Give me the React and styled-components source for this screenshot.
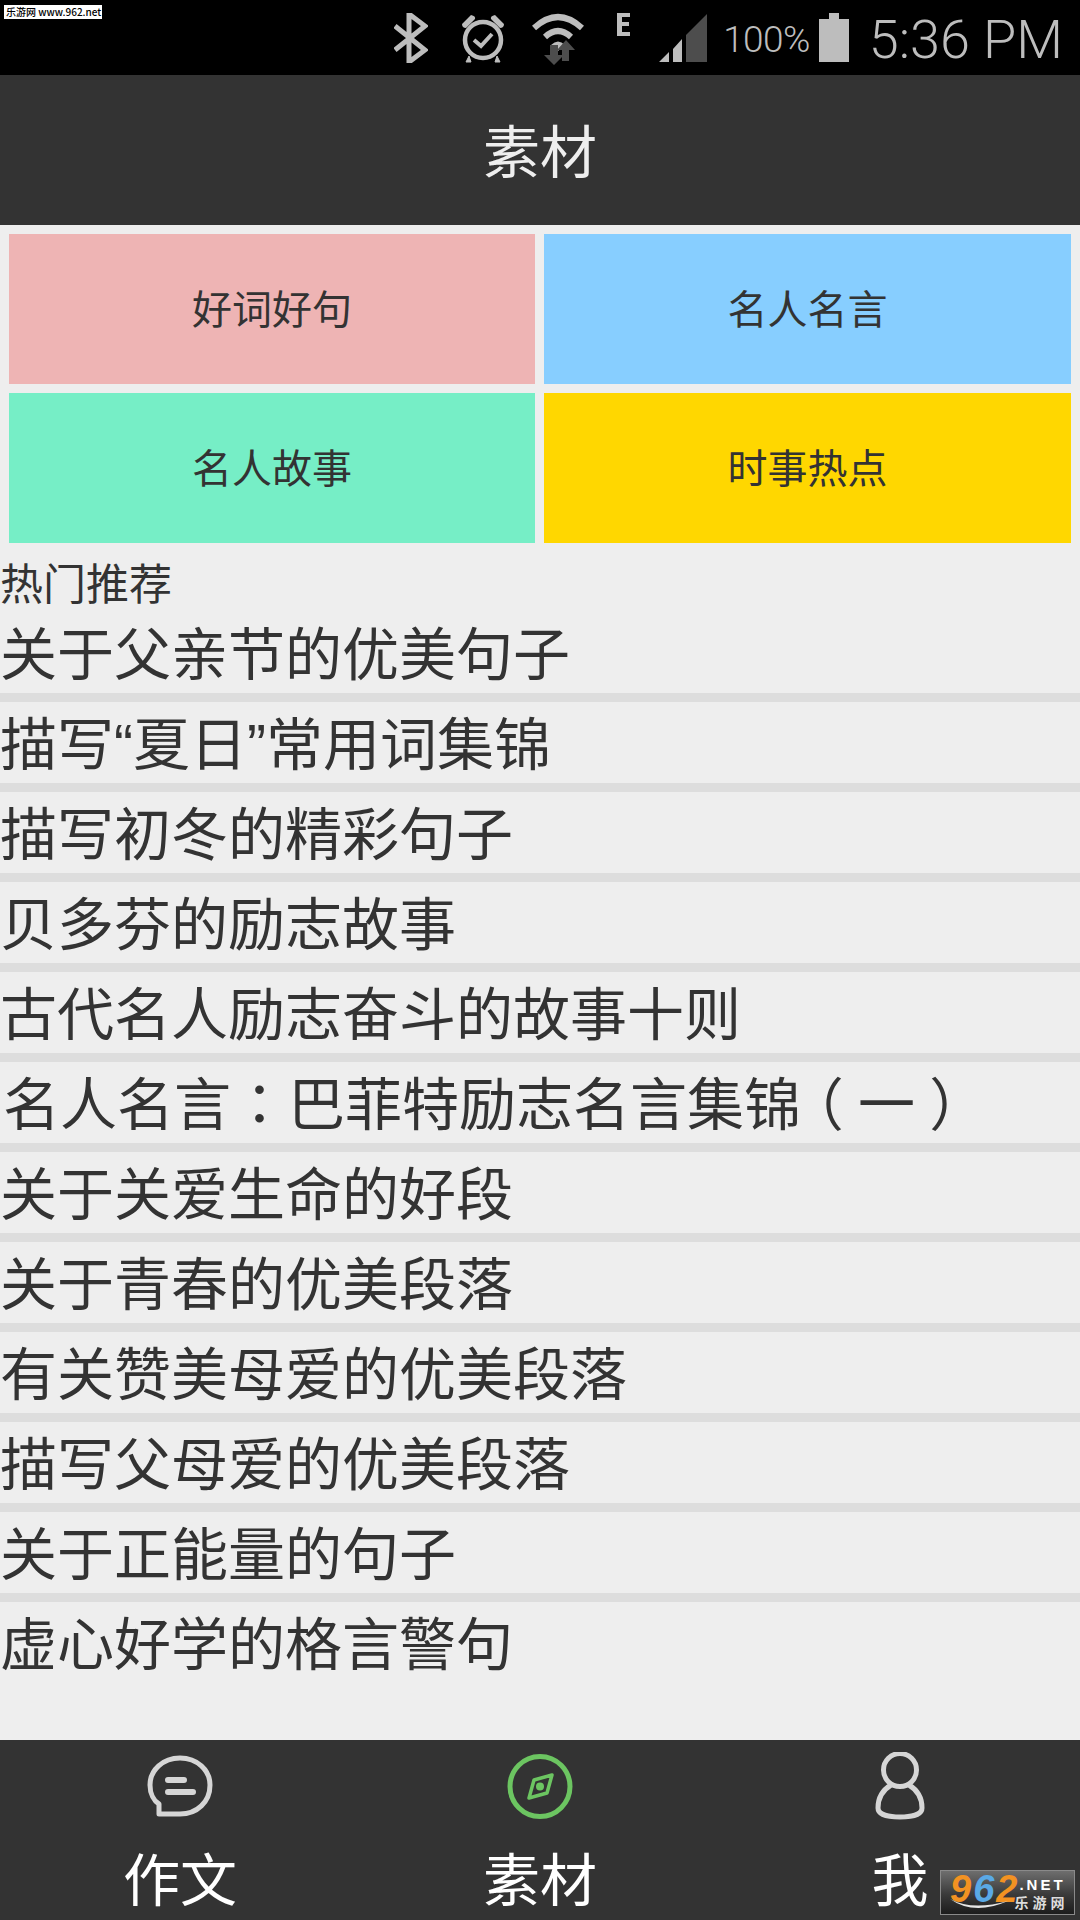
import React from "react";
import styled, { createGlobalStyle } from "styled-components";

const CJK = `"Noto Sans CJK SC", "Noto Sans", sans-serif`;

const Global = createGlobalStyle`
  html, body { margin: 0; padding: 0; background: #eee; }
  * { box-sizing: border-box; }
`;

const Page = styled.div`
  position: relative;
  width: 1080px;
  height: 1920px;
  display: flex;
  flex-direction: column;
  background: #eee;
  font-family: ${CJK};
  overflow: hidden;
`;

const StatusBar = styled.div`
  position: relative;
  height: 75px;
  flex: none;
  background: #000;
  display: flex;
  align-items: center;
  justify-content: flex-end;
  padding-right: 17px;
  color: #bdbdbd;
  font-family: Roboto, sans-serif;
  font-weight: 300;
`;

const Stamp = styled.div`
  position: absolute;
  left: 4px;
  top: 5px;
  width: 98px;
  height: 14px;
  background: #fff;
  color: #000;
  font: 500 10px/14px ${CJK};
  white-space: nowrap;
  padding-left: 2px;
`;

const Glyph = styled.svg`
  display: block;
  flex: none;
  margin-right: ${(p) => p.$gap || 0}px;
`;

const Percent = styled.span`
  font-size: 37px;
  letter-spacing: -0.6px;
  margin-right: 9px;
  margin-top: 4px;
`;

const Clock = styled.span`
  font-size: 54px;
  line-height: 75px;
  margin-top: 4px;
`;

const Header = styled.div`
  height: 150px;
  flex: none;
  background: #333;
  color: #eee;
  font-size: 57px;
  padding-bottom: 5px;
  display: flex;
  align-items: center;
  justify-content: center;
`;

const TileGrid = styled.div`
  display: grid;
  grid-template-columns: 526px 527px;
  grid-auto-rows: 150px;
  gap: 9px;
  padding: 9px 9px 0;
`;

const Tile = styled.div`
  background: ${(p) => p.$bg};
  color: #333;
  font-size: 40px;
  padding-bottom: 4px;
  display: flex;
  align-items: center;
  justify-content: center;
`;

const SectionTitle = styled.div`
  height: 69px;
  padding-top: 8px;
  color: #333;
  font-size: 43px;
  line-height: 61px;
`;

const List = styled.div`
  flex: 1;
`;

const Row = styled.div`
  height: 90px;
  border-bottom: ${(p) => (p.$last ? "none" : "9px solid #ddd")};
  padding: 5px 0 0 ${(p) => (p.$inset ? 3 : 0)}px;
  color: #333;
  font-family: "Liberation Sans", ${CJK};
  font-size: 57px;
  line-height: 76px;
  white-space: nowrap;
`;

// full-width punctuation, centred in its own em box
const Punct = styled.span`
  display: inline-block;
  width: 1em;
  line-height: 1;
  text-align: center;
  font-family: "Noto Sans CJK TC", sans-serif;
  font-feature-settings: "halt";
`;

const BottomNav = styled.div`
  height: 180px;
  flex: none;
  background: #333;
  display: grid;
  grid-template-columns: repeat(3, 1fr);
`;

const NavItem = styled.div`
  display: flex;
  flex-direction: column;
  align-items: center;
  padding-top: 12px;
  color: #fff;
`;

const NavIcon = styled.svg`
  display: block;
  width: 70px;
  height: 70px;
`;

const NavLabel = styled.div`
  font-size: 57px;
  line-height: 70px;
  margin-top: 19px;
`;

// corner badge that sits on top of the tab bar
const Badge = styled.div`
  position: absolute;
  left: 940px;
  top: 1870px;
  width: 135px;
  height: 45px;
  border: 1px solid #8a8a8a;
  background: linear-gradient(#6e6e6e, #3a3a3a 55%, #1c1c1c);
  display: flex;
  align-items: flex-start;
  padding-left: 9px;
  color: #fff;
  font-family: "Liberation Sans", sans-serif;
  font-weight: 700;
`;

const BadgeNums = styled.div`
  display: flex;
  gap: 2px;
  flex: none;
`;

const BadgeNum = styled.span`
  font-size: 38px;
  line-height: 36px;
  font-style: italic;
  color: ${(p) => p.$c};
`;

const BadgeSide = styled.div`
  margin-left: -3px;
  padding-top: 7px;
  display: flex;
  flex-direction: column;
`;

const BadgeNet = styled.span`
  font-size: 15px;
  line-height: 14px;
  letter-spacing: 3px;
  padding-left: 5px;
  white-space: nowrap;
`;

const BadgeCn = styled.span`
  font: 700 14px/20px ${CJK};
  letter-spacing: 4px;
  white-space: nowrap;
  color: #ddd;
`;

const Swoosh = styled.svg`
  position: absolute;
  left: 9px;
  top: 25px;
  width: 58px;
  height: 16px;
`;

const topics = [
  "关于父亲节的优美句子",
  "描写“夏日”常用词集锦",
  "描写初冬的精彩句子",
  "贝多芬的励志故事",
  "古代名人励志奋斗的故事十则",
  "名人名言:巴菲特励志名言集锦(一)",
  "关于关爱生命的好段",
  "关于青春的优美段落",
  "有关赞美母爱的优美段落",
  "描写父母爱的优美段落",
  "关于正能量的句子",
  "虚心好学的格言警句",
];

const tiles = [
  ["好词好句", "#eeb4b4"],
  ["名人名言", "#87ceff"],
  ["名人故事", "#76eec6"],
  ["时事热点", "#ffd700"],
];

const FULL_WIDTH = /([\uFF1A\uFF08\uFF09])/;

function Topic({ text, last }) {
  const parts = text.replace(":", "\uFF1A").replace("(", "\uFF08").replace(")", "\uFF09").split(FULL_WIDTH);
  return (
    <Row $last={last} $inset={parts.length > 1}>
      {parts.map((part, i) =>
        FULL_WIDTH.test(part) ? <Punct key={i}>{part}</Punct> : part
      )}
    </Row>
  );
}

export default function App() {
  return (
    <Page>
      <Global />
      <StatusBar>
        <Stamp>乐游网 www.962.net</Stamp>
        {/* bluetooth */}
        <Glyph width="34" height="50" viewBox="0 0 34 50" $gap={32}>
          <path d="M1 13 L31 37 L15 49 V1 L31 13 L1 37" fill="none" stroke="#bdbdbd" strokeWidth="5" />
        </Glyph>
        {/* alarm */}
        <Glyph width="46" height="50" viewBox="0 0 46 50" $gap={26}>
          <circle cx="23" cy="27" r="18" fill="none" stroke="#bdbdbd" strokeWidth="4.5" />
          <path d="M2 11 L11 2 Q16 3 15 6 L6 15 Q2 15 2 11Z M44 11 L35 2 Q30 3 31 6 L40 15 Q44 15 44 11Z" fill="#bdbdbd" />
          <path d="M14 27 L21 33 L32 21" fill="none" stroke="#bdbdbd" strokeWidth="4" />
          <path d="M9 43 L6 49 H11Z M37 43 L40 49 H35Z" fill="#bdbdbd" stroke="#bdbdbd" />
        </Glyph>
        {/* wifi with traffic arrows */}
        <Glyph width="52" height="54" viewBox="0 0 52 54" $gap={33}>
          <path d="M2 17 Q26 -5 50 17" fill="none" stroke="#bdbdbd" strokeWidth="6" />
          <path d="M13 26 Q26 14 39 26" fill="none" stroke="#bdbdbd" strokeWidth="6" />
          <path d="M19 34 Q26 27 33 34 L26 40Z" fill="#bdbdbd" />
          <path d="M18 34 H26 V44 H32 L22 54 L12 44 H18Z" fill="#4d4d4d" />
          <path d="M37 50 H30 V39 H25 L34 29 L43 39 H37Z" fill="#4d4d4d" />
        </Glyph>
        {/* network type + signal */}
        <Glyph width="14" height="50" viewBox="0 0 14 50" $gap={28}>
          <path d="M0 0 H13 V4 H5 V9 H12 V13 H5 V19 H13 V23 H0Z" fill="#bdbdbd" />
        </Glyph>
        <Glyph width="48" height="50" viewBox="0 0 48 50" $gap={16}>
          <path d="M0 49 L10 39 V49Z M14 36 L23 26 V49 H14Z" fill="#bdbdbd" />
          <path d="M27 22 L48 1 V49 H27Z" fill="#4d4d4d" />
        </Glyph>
        <Percent>100%</Percent>
        {/* battery */}
        <Glyph width="30" height="49" viewBox="0 0 30 49" $gap={20}>
          <path d="M10 0 H20 V6 H30 V49 H0 V6 H10Z" fill="#bdbdbd" />
        </Glyph>
        <Clock>5:36 PM</Clock>
      </StatusBar>

      <Header>素材</Header>

      <TileGrid>
        {tiles.map(([label, bg]) => (
          <Tile key={label} $bg={bg}>{label}</Tile>
        ))}
      </TileGrid>

      <SectionTitle>热门推荐</SectionTitle>

      <List>
        {topics.map((t, i) => (
          <Topic key={t} text={t} last={i === topics.length - 1} />
        ))}
      </List>

      <BottomNav>
        <NavItem>
          <NavIcon viewBox="0 0 70 70">
            <path d="M35 6 C18 6 5 18 5 33 C5 42 9 49 14 52 V62 H35 C52 62 65 50 65 33 C65 18 52 6 35 6Z" fill="none" stroke="#d6d6d6" strokeWidth="5" strokeLinejoin="round" />
            <path d="M23 28 H39 M23 40 H48" stroke="#d6d6d6" strokeWidth="6" strokeLinecap="round" />
          </NavIcon>
          <NavLabel>作文</NavLabel>
        </NavItem>
        <NavItem>
          <NavIcon viewBox="0 0 70 70">
            <circle cx="35" cy="34.5" r="30" fill="none" stroke="#6cc561" strokeWidth="5" />
            <path d="M47 23 L29 28 L24 46 L42 41Z" fill="none" stroke="#6cc561" strokeWidth="3.5" strokeLinejoin="round" />
            <circle cx="35" cy="34.5" r="4" fill="#6cc561" />
          </NavIcon>
          <NavLabel>素材</NavLabel>
        </NavItem>
        <NavItem>
          <NavIcon viewBox="0 0 70 70">
            <circle cx="35" cy="18" r="16.5" fill="none" stroke="#d6d6d6" strokeWidth="5" />
            <path d="M26 33 C16 39 13 47 13 56 C13 63 25 65 35 65 C45 65 57 63 57 56 C57 47 54 39 44 33" fill="none" stroke="#d6d6d6" strokeWidth="5" />
          </NavIcon>
          <NavLabel>我</NavLabel>
        </NavItem>
      </BottomNav>

      <Badge>
        <BadgeNums>
          <BadgeNum $c="#f29222">9</BadgeNum>
          <BadgeNum $c="#5aa9e6">6</BadgeNum>
          <BadgeNum $c="#f29222">2</BadgeNum>
        </BadgeNums>
        <BadgeSide>
          <BadgeNet>.NET</BadgeNet>
          <BadgeCn>乐游网</BadgeCn>
        </BadgeSide>
        <Swoosh viewBox="0 0 58 16">
          <path d="M0 3 Q22 15 58 5 Q24 20 0 3Z" fill="#e6e6e6" />
        </Swoosh>
      </Badge>
    </Page>
  );
}
